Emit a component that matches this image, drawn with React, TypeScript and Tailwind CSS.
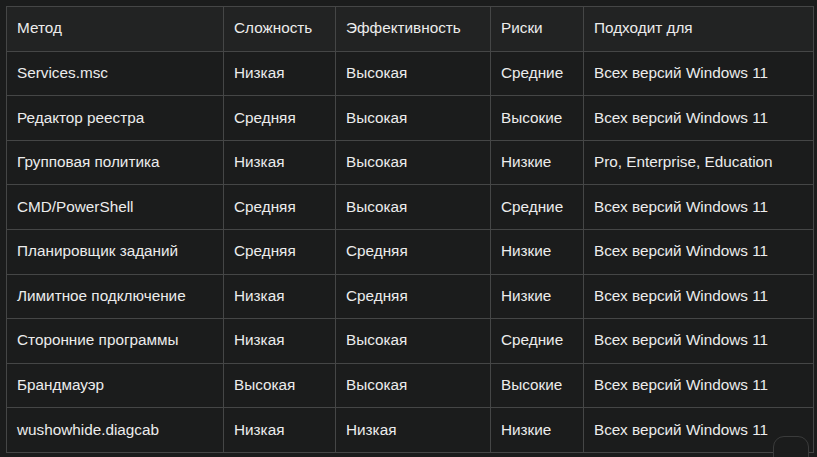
const rows = [
  ["Services.msc", "Низкая", "Высокая", "Средние", "Всех версий Windows 11"],
  ["Редактор реестра", "Средняя", "Высокая", "Высокие", "Всех версий Windows 11"],
  ["Групповая политика", "Низкая", "Высокая", "Низкие", "Pro, Enterprise, Education"],
  ["CMD/PowerShell", "Средняя", "Высокая", "Средние", "Всех версий Windows 11"],
  ["Планировщик заданий", "Средняя", "Средняя", "Низкие", "Всех версий Windows 11"],
  ["Лимитное подключение", "Низкая", "Средняя", "Низкие", "Всех версий Windows 11"],
  ["Сторонние программы", "Низкая", "Высокая", "Средние", "Всех версий Windows 11"],
  ["Брандмауэр", "Высокая", "Высокая", "Высокие", "Всех версий Windows 11"],
  ["wushowhide.diagcab", "Низкая", "Низкая", "Низкие", "Всех версий Windows 11"],
];

const headers = ["Метод", "Сложность", "Эффективность", "Риски", "Подходит для"];

export default function App() {
  return (
    <div className="relative h-[457px] w-[817px] overflow-hidden bg-[#1b1c1c] pl-[6px] pt-[6px] font-['Liberation_Sans',Arial,sans-serif] text-[15.3px] text-[#ececec]">
      <table className="w-[807px] table-fixed border-collapse">
        <colgroup>
          <col className="w-[217px]" />
          <col className="w-[112px]" />
          <col className="w-[155px]" />
          <col className="w-[93px]" />
          <col className="w-[230px]" />
        </colgroup>
        <thead>
          <tr className="h-[44.6px] bg-[#222323]">
            {headers.map((h) => (
              <th key={h} className="border border-[#454646] px-[10px] text-left font-normal">
                {h}
              </th>
            ))}
          </tr>
        </thead>
        <tbody>
          {rows.map((row) => (
            <tr key={row[0]} className="h-[44.6px]">
              {row.map((cell, i) => (
                <td key={i} className="border border-[#454646] px-[10px] whitespace-nowrap">
                  {cell}
                </td>
              ))}
            </tr>
          ))}
        </tbody>
      </table>
      <div className="absolute left-[773px] top-[436px] h-[36px] w-[36px] rounded-[11px] border border-[#3a3b3b] bg-[#1b1c1c]" />
    </div>
  );
}
